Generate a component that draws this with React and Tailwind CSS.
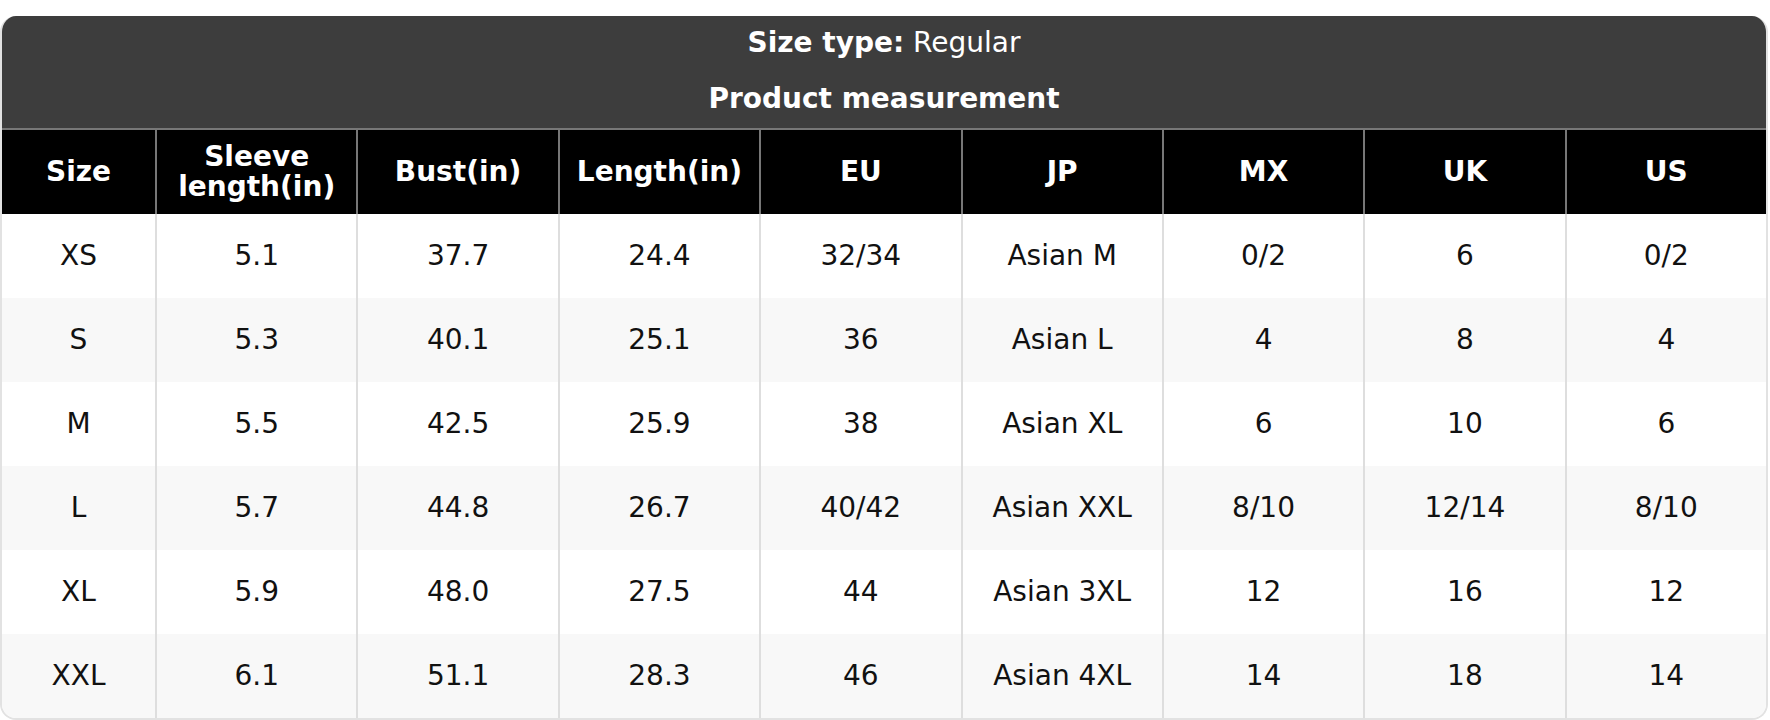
const columns = ["Size", "Sleeve length(in)", "Bust(in)", "Length(in)", "EU", "JP", "MX", "UK", "US"];

const rows = [
  ["XS", "5.1", "37.7", "24.4", "32/34", "Asian M", "0/2", "6", "0/2"],
  ["S", "5.3", "40.1", "25.1", "36", "Asian L", "4", "8", "4"],
  ["M", "5.5", "42.5", "25.9", "38", "Asian XL", "6", "10", "6"],
  ["L", "5.7", "44.8", "26.7", "40/42", "Asian XXL", "8/10", "12/14", "8/10"],
  ["XL", "5.9", "48.0", "27.5", "44", "Asian 3XL", "12", "16", "12"],
  ["XXL", "6.1", "51.1", "28.3", "46", "Asian 4XL", "14", "18", "14"],
];

const grid = "grid grid-cols-[153px_repeat(8,minmax(0,1fr))]";

export default function App() {
  return (
    <div className="bg-white pt-4 font-['DejaVu_Sans',sans-serif]">
      <div className="w-[1768px] overflow-hidden rounded-2xl border-x-2 border-b-2 border-[#e2e2e2] bg-white">
        <div className="flex h-[112px] flex-col items-center bg-[#3d3d3d] pt-[10px] text-white">
          <div className="text-[28px] leading-[34px]">
            <span className="font-bold">Size type:</span> Regular
          </div>
          <div className="mt-[22px] text-[28px] font-bold leading-[34px]">Product measurement</div>
        </div>
        <div className={`${grid} h-[86px] border-t-2 border-[#777] bg-black text-white`}>
          {columns.map((c, i) => (
            <div
              key={c}
              className={`flex items-center justify-center px-2 text-center text-[28px] font-bold leading-[30px] ${i > 0 ? "border-l-2 border-[#777]" : ""}`}
            >
              {c === "Sleeve length(in)" ? (
                <span>
                  Sleeve
                  <br />
                  length(in)
                </span>
              ) : (
                c
              )}
            </div>
          ))}
        </div>
        {rows.map((r, ri) => (
          <div key={r[0]} className={`${grid} h-[84px] ${ri % 2 ? "bg-[#f8f8f8]" : "bg-white"} text-[#111]`}>
            {r.map((v, i) => (
              <div
                key={i}
                className={`flex items-center justify-center text-[28px] ${i > 0 ? "border-l-2 border-[#dedede]" : ""}`}
              >
                {v}
              </div>
            ))}
          </div>
        ))}
      </div>
    </div>
  );
}
